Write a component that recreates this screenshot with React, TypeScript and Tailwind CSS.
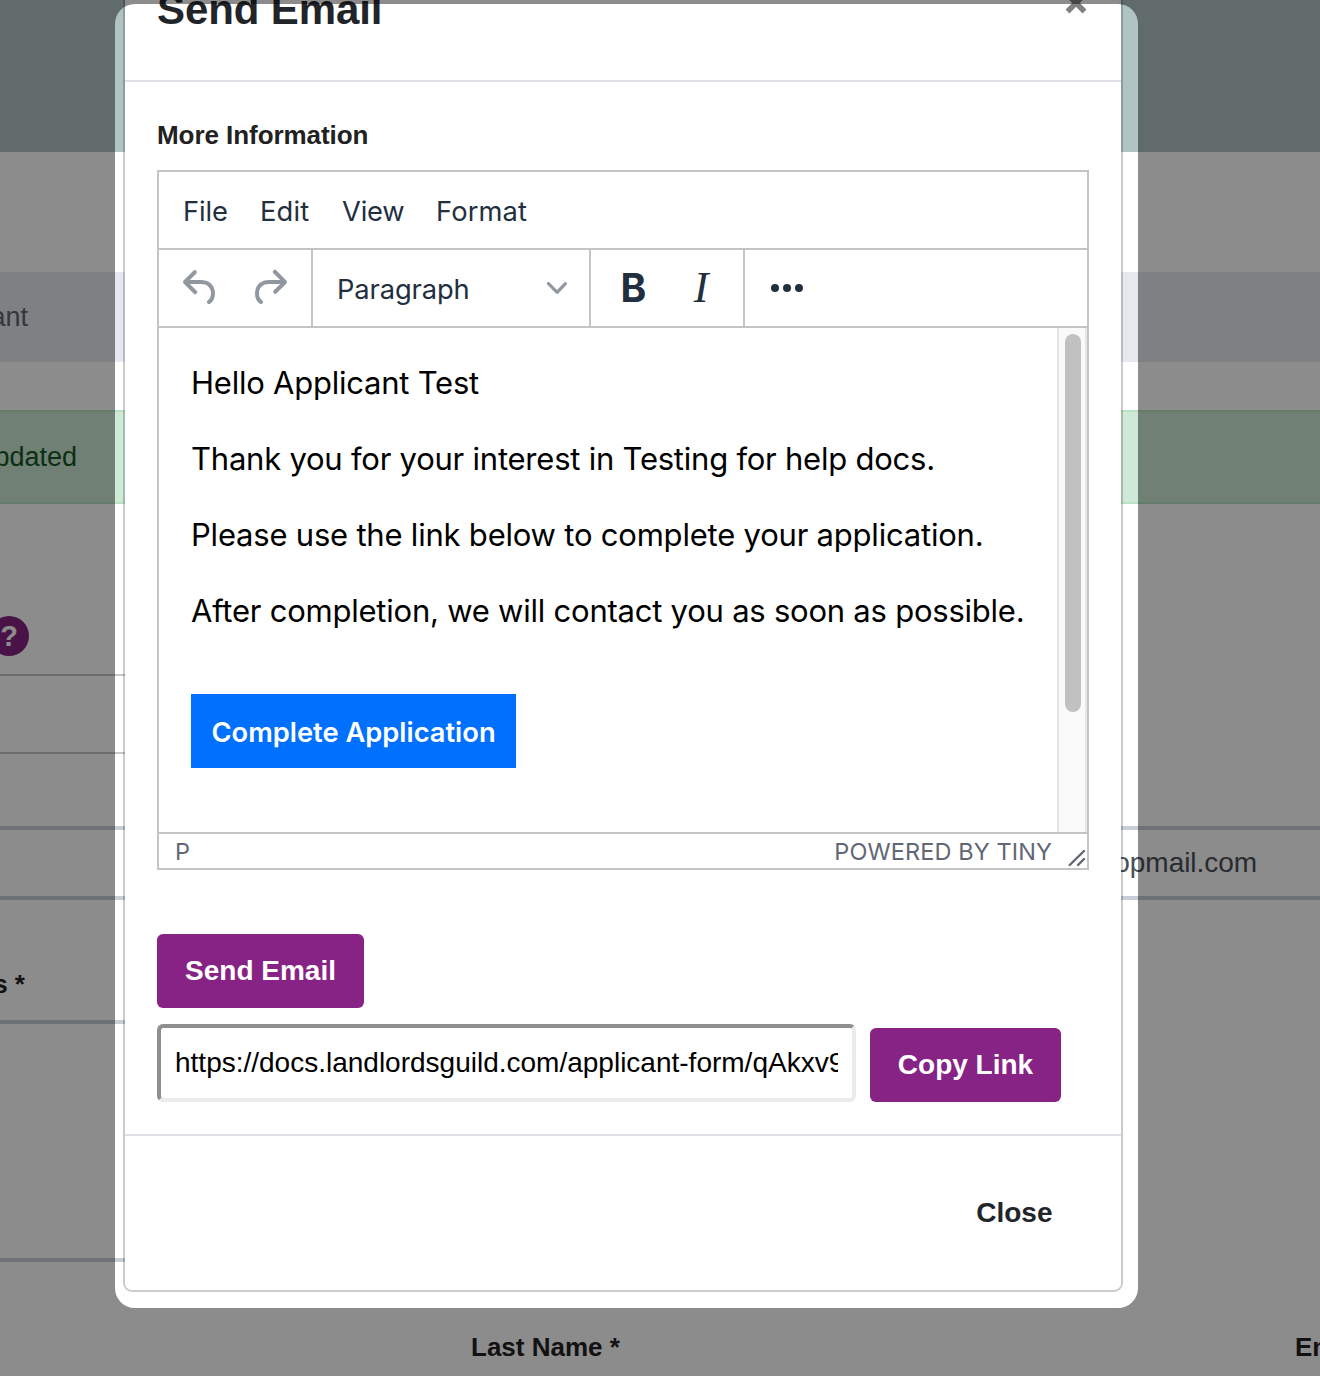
import React from "react";

function Backdrop() {
  return (
    <div className="flex h-[1376px] w-[1320px] flex-col bg-white font-['Liberation_Sans',sans-serif] text-[28px]">
      <div className="h-[152px] shrink-0 bg-[#b1c4c4]" />
      <div className="mt-[120px] flex h-[90px] shrink-0 items-center bg-[#e5e9ef]">
        <span className="flex w-[28px] justify-end whitespace-nowrap text-[27px] text-[#5d666d]">ant</span>
      </div>
      <div className="mt-[48px] flex h-[94px] shrink-0 items-center border-y-2 border-[#b9e2c4] bg-[#cee9d5]">
        <span className="flex w-[77px] justify-end whitespace-nowrap text-[27px] text-[#155724]">pdated</span>
      </div>
      <div className="mt-[112px] flex h-[40px] shrink-0">
        <div className="-ml-[11px] flex size-[40px] items-center justify-center rounded-full bg-[#872384] pt-px text-[29px] font-bold text-white">?</div>
      </div>
      <div className="mt-[18px] h-[80px] w-[600px] shrink-0 border-y-2 border-[#c8c8c8]" />
      <div className="mt-[72px] flex h-[74px] shrink-0 items-center border-y-4 border-[#c7ced8]">
        <span className="flex w-[1257px] justify-end tracking-[-0.05px] text-[#495057]">opmail.com</span>
      </div>
      <div className="mt-[68px] flex h-[32px] shrink-0 items-center">
        <span className="flex w-[25px] justify-end whitespace-nowrap text-[26px] font-bold text-[#212121]">s *</span>
      </div>
      <div className="mt-[20px] h-[242px] w-[600px] shrink-0 border-y-4 border-[#c7ced8]" />
      <div className="mt-[70px] flex h-[30px] shrink-0 items-center whitespace-nowrap pl-[471px] text-[26px] font-bold text-[#212121]">
        <span className="w-[824px] shrink-0">Last Name *</span>
        <span className="shrink-0">Email *</span>
      </div>
    </div>
  );
}

function Editor() {
  return (
    <div className="flex h-[700px] w-[932px] flex-col border-2 border-[#c4c4c4] bg-white font-[Inter,sans-serif] text-[#222f3e]">
      <div className="flex h-[78px] shrink-0 items-center border-b-2 border-[#c4c4c4] pl-[24px] pt-[4px] text-[27.3px]">
        <span className="w-[77px] tracking-[-0.1px]">File</span>
        <span className="w-[82px] tracking-[0.2px]">Edit</span>
        <span className="w-[94px] tracking-[-0.2px]">View</span>
        <span className="tracking-[0.15px]">Format</span>
      </div>
      <div className="flex h-[78px] shrink-0 border-b-2 border-[#c4c4c4]">
        <div className="flex w-[154px] items-center gap-[20px] border-r-2 border-[#c4c4c4] pl-[18px] text-[#90979e]">
          <svg className="size-[48px]" viewBox="0 0 24 24" fill="currentColor">
            <path d="M6.4 8H12c3.7 0 6.2 2 6.8 5.1.6 2.7-.4 5.6-2.3 6.8a1 1 0 01-1-1.8c1.1-.6 1.8-2.7 1.4-4.6-.5-2.1-2.1-3.5-4.9-3.5H6.4l3.3 3.3a1 1 0 11-1.4 1.4l-5-5a1 1 0 010-1.4l5-5a1 1 0 011.4 1.4L6.4 8z" />
          </svg>
          <svg className="size-[48px]" viewBox="0 0 24 24" fill="currentColor">
            <path d="M17.6 10H12c-2.8 0-4.4 1.4-4.9 3.5-.4 2 .3 4 1.4 4.6a1 1 0 11-1 1.8c-2-1.2-2.9-4.1-2.3-6.8.6-3 3-5.1 6.8-5.1h5.6l-3.3-3.3a1 1 0 111.4-1.4l5 5a1 1 0 010 1.4l-5 5a1 1 0 01-1.4-1.4l3.3-3.3z" />
          </svg>
        </div>
        <div className="flex w-[278px] items-center justify-between border-r-2 border-[#c4c4c4] pl-[24px] pr-[22px] text-[27.3px]">
          <span className="pt-[4px] tracking-[-0.1px]">Paragraph</span>
          <svg className="size-[20px] text-[#90979e]" viewBox="0 0 10 10" fill="currentColor">
            <path d="M8.7 2.2c.3-.3.8-.3 1 0 .4.4.4.9 0 1.2L5.7 7.8c-.3.3-.9.3-1.2 0L.2 3.4a.8.8 0 010-1.2c.3-.3.8-.3 1.1 0L5 6l3.7-3.8z" />
          </svg>
        </div>
        <div className="flex w-[154px] items-center border-r-2 border-[#c4c4c4] pl-[8px]">
          <span className="flex w-[68px] justify-center pl-px text-[39px] font-bold">B</span>
          <span className="flex w-[68px] justify-center font-['Liberation_Serif',serif] text-[44px] italic">I</span>
        </div>
        <div className="flex items-center pl-[18px]">
          <svg className="size-[48px]" viewBox="0 0 24 24" fill="currentColor">
            <circle cx="6" cy="12" r="2" />
            <circle cx="12" cy="12" r="2" />
            <circle cx="18" cy="12" r="2" />
          </svg>
        </div>
      </div>
      <div className="flex h-[504px] shrink-0">
        <div className="flex w-[898px] flex-col gap-[32px] whitespace-nowrap pl-[32px] pt-[33px] text-[31px] leading-[44px] tracking-[-0.23px] text-black">
          <p>Hello Applicant Test</p>
          <p>Thank you for your interest in Testing for help docs.</p>
          <p className="tracking-[-0.21px]">Please use the link below to complete your application.</p>
          <p>After completion, we will contact you as soon as possible.</p>
          <div className="mt-[29px] flex h-[74px] w-[325px] items-center justify-center bg-[#0070ff] pt-[3px] text-[27.3px] font-semibold tracking-[0px] text-white">
            Complete Application
          </div>
        </div>
        <div className="flex w-[30px] border-x-2 border-[#e6e6e6] bg-[#fafafa] pl-[6px] pt-[6px]">
          <div className="h-[378px] w-[16px] rounded-full bg-[#c1c1c1]" />
        </div>
      </div>
      <div className="flex h-[36px] shrink-0 items-center border-t-2 border-[#c4c4c4] pl-[16px] text-[23.5px] text-[#5f6874]">
        <span className="grow pt-[2px]">P</span>
        <span className="pt-[2px] tracking-[0.1px]">POWERED BY TINY</span>
        <svg className="ml-[15px] mt-[13px] size-[20px]" viewBox="0 0 20 20" fill="none" stroke="currentColor" strokeWidth="2.4" strokeLinecap="round">
          <path d="M2.7 17 17 3M11 17l6-6" />
        </svg>
      </div>
    </div>
  );
}

function Modal() {
  return (
    <div className="absolute left-[123px] top-[-60px] flex h-[1352px] w-[1000px] flex-col rounded-[9px] border-2 border-black/20 bg-white bg-clip-padding font-['Liberation_Sans',sans-serif]">
      <div className="flex h-[140px] shrink-0 justify-between border-b-2 border-[#dee2e6] pl-[32px] pr-[33px] text-[#212529]">
        <h2 className="mt-[44px] text-[42px] font-bold leading-[48px] tracking-[-0.1px]">Send Email</h2>
        <svg className="mt-[49px] h-[24px] w-[24px]" viewBox="0 0 24 24" fill="none" stroke="#808080" strokeWidth="5.4">
          <path d="M3.5 3.5l17 17M20.5 3.5l-17 17" />
        </svg>
      </div>
      <div className="flex h-[1052px] shrink-0 flex-col items-start pl-[32px]">
        <h3 className="mt-[38px] h-[50px] text-[26px] font-bold leading-[30px] tracking-[-0.06px] text-[#212121]">More Information</h3>
        <Editor />
        <button className="mt-[64px] h-[74px] w-[207px] shrink-0 rounded-[6px] bg-[#872384] text-[28px] font-bold text-white">Send Email</button>
        <div className="mt-[16px] flex items-end gap-[14px]">
          <div className="flex h-[78px] w-[699px] items-center rounded-[6px] border-4 border-b-[#ebebeb] border-l-[#8f8f8f] border-r-[#ebebeb] border-t-[#8f8f8f] px-[14px] text-[28px] text-black">
            <span className="w-[663px] overflow-hidden whitespace-nowrap">https://docs.landlordsguild.com/applicant-form/qAkxv9</span>
          </div>
          <button className="h-[74px] w-[191px] rounded-[6px] bg-[#872384] text-[28px] font-bold text-white">Copy Link</button>
        </div>
      </div>
      <div className="flex grow items-center justify-end border-t-2 border-[#dee2e6] pr-[68.5px] text-[28px] font-bold text-[#212529]">Close</div>
    </div>
  );
}

export default function App() {
  return (
    <div className="relative h-[1376px] w-[1320px] overflow-hidden bg-white">
      <Backdrop />
      <Modal />
      <div className="absolute left-[115px] top-[4px] h-[1303.5px] w-[1022.5px] rounded-[20px] shadow-[0_0_0_1400px_rgba(0,0,0,0.45)]" />
    </div>
  );
}
